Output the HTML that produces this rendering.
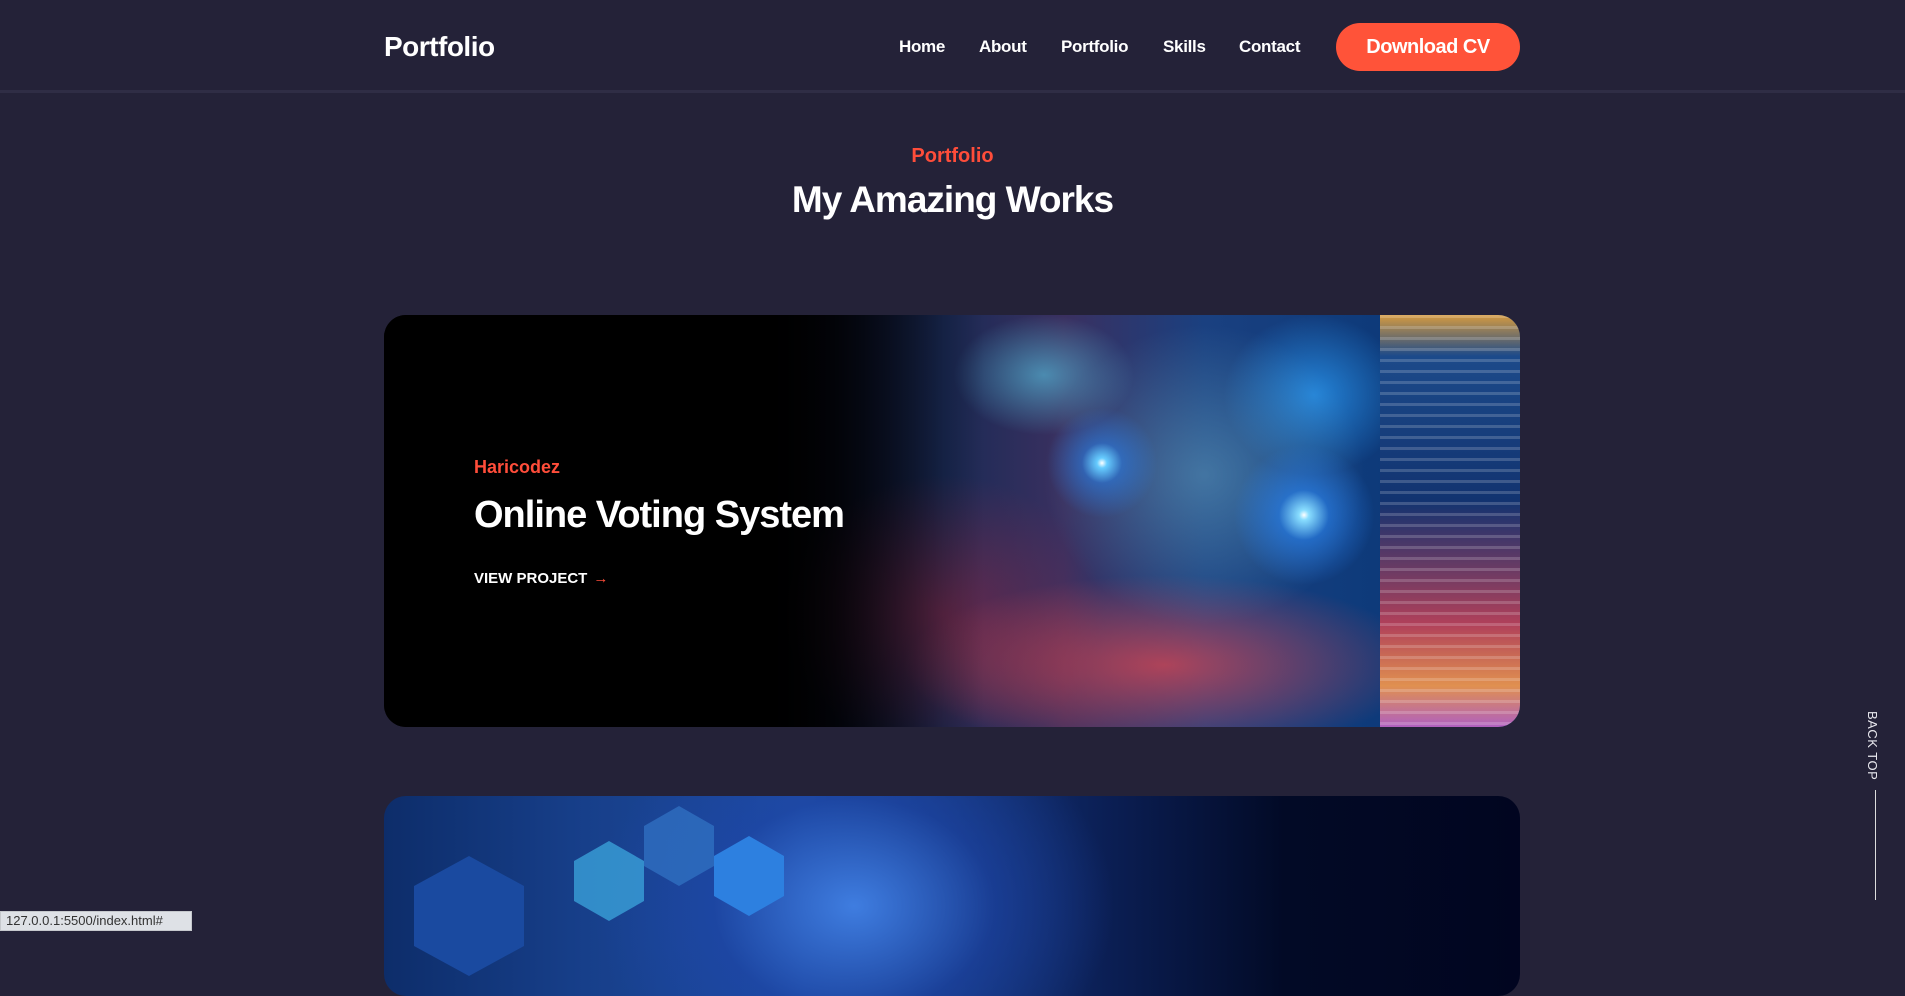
<!DOCTYPE html>
<html><head><meta charset="utf-8"><style>
*{margin:0;padding:0;box-sizing:border-box}
html,body{width:1905px;height:931px;overflow:hidden;background:#242238;font-family:"Liberation Sans",sans-serif;color:#fff}
.hdr{position:absolute;left:0;top:0;width:1905px;height:93px;border-bottom:3px solid #2f2d45}
.logo{position:absolute;left:384px;top:31px;font-size:28px;font-weight:bold;letter-spacing:-0.5px}
.nav a{position:absolute;top:37px;font-size:17px;font-weight:bold;color:#fff;text-decoration:none;letter-spacing:-0.3px}
.btn{position:absolute;left:1336px;top:23px;width:184px;height:48px;border-radius:24px;background:#ff5339;font-size:20px;font-weight:bold;text-align:center;line-height:48px;letter-spacing:-0.5px}
.sub{position:absolute;left:0;width:1905px;text-align:center;top:145px;font-size:20px;font-weight:bold;color:#ff4d3a}
.h2{position:absolute;left:0;width:1905px;text-align:center;top:179px;font-size:37px;font-weight:bold;letter-spacing:-1px}
.card{position:absolute;left:384px;width:1136px;border-radius:22px;overflow:hidden}
.c1{top:315px;height:412px;background:
radial-gradient(circle at 920px 200px,#fff 0,#8df 5px,rgba(40,130,240,.6) 25px,transparent 70px),
radial-gradient(circle at 718px 148px,#fff 0,#6cf 5px,rgba(40,130,240,.5) 20px,transparent 55px),
radial-gradient(ellipse 90px 60px at 660px 60px,rgba(90,200,230,.6),transparent),
radial-gradient(ellipse 160px 150px at 820px 160px,rgba(100,160,190,.55),transparent),
radial-gradient(ellipse 260px 90px at 780px 350px,rgba(220,70,80,.75),transparent),
radial-gradient(ellipse 160px 140px at 560px 300px,rgba(150,40,70,.6),transparent),
radial-gradient(ellipse 90px 80px at 930px 80px,rgba(40,150,240,.8),transparent),
linear-gradient(90deg,#000 0,#000 380px,#0a0f25 460px,#1a2a55 560px,#3a3060 680px,#1a4080 820px,#0d3a7a 1000px,#1a4a90 1136px);}
.c1 .code{position:absolute;left:996px;top:0;width:140px;height:412px;background:
repeating-linear-gradient(180deg,rgba(255,255,255,.18) 0 3px,transparent 3px 11px),
linear-gradient(180deg,#d59a40 0,#1c4a8a 10%,#123370 45%,#b0405a 75%,#e09050 90%,#b060c0 100%)}
.c1 .fade{position:absolute;left:0;top:0;width:1136px;height:412px;background:linear-gradient(90deg,#000 0,#000 370px,rgba(0,0,0,.75) 450px,rgba(0,0,0,0) 600px)}
.c2{top:796px;height:200px;background:radial-gradient(ellipse 260px 200px at 470px 110px,#3f7de0,rgba(30,70,170,.6) 140px,transparent 260px),linear-gradient(90deg,#0d2d6a 0,#173f8a 200px,#1d4b9e 420px,#0b1f55 720px,#020a26 900px,#010520 1136px)}
.hex{position:absolute;width:70px;height:80px;clip-path:polygon(50% 0,100% 25%,100% 75%,50% 100%,0 75%,0 25%)}
.k1{position:absolute;left:474px;top:457px;font-size:18px;font-weight:bold;color:#ff4d3a}
.k2{position:absolute;left:474px;top:494px;font-size:38px;font-weight:bold;letter-spacing:-1px}
.k3{position:absolute;left:474px;top:570px;font-size:15px;font-weight:bold}
.k3 span{color:#ff4d3a;margin-left:6px}
.bt{position:absolute;left:1865px;top:711px;font-size:13px;writing-mode:vertical-rl;color:#e8e8ee;letter-spacing:.5px}
.bl{position:absolute;left:1875px;top:790px;width:1px;height:110px;background:#ddd}
.st{position:absolute;left:0;top:911px;width:192px;height:20px;background:#dee1e6;border:1px solid #c5c8cc;color:#333;font-size:13px;line-height:18px;padding-left:5px}
</style></head><body>
<div class="hdr"></div>
<div class="logo">Portfolio</div>
<div class="nav"><a style="left:899px">Home</a><a style="left:979px">About</a><a style="left:1061px">Portfolio</a><a style="left:1163px">Skills</a><a style="left:1239px">Contact</a></div>
<div class="btn">Download CV</div>
<div class="sub">Portfolio</div>
<div class="h2">My Amazing Works</div>
<div class="card c1"><div class="code"></div><div class="fade"></div></div>
<div class="k1">Haricodez</div>
<div class="k2">Online Voting System</div>
<div class="k3">VIEW PROJECT<span>→</span></div>
<div class="card c2">
<div class="hex" style="left:30px;top:60px;width:110px;height:120px;background:#1a4aa0"></div>
<div class="hex" style="left:190px;top:45px;background:#3aa0d8;opacity:.8"></div>
<div class="hex" style="left:260px;top:10px;background:#2f6fc0;opacity:.8"></div>
<div class="hex" style="left:330px;top:40px;background:#2d80e0"></div>
</div>
<div class="bt">BACK TOP</div>
<div class="bl"></div>
<div class="st">127.0.0.1:5500/index.html#</div>
</body></html>
